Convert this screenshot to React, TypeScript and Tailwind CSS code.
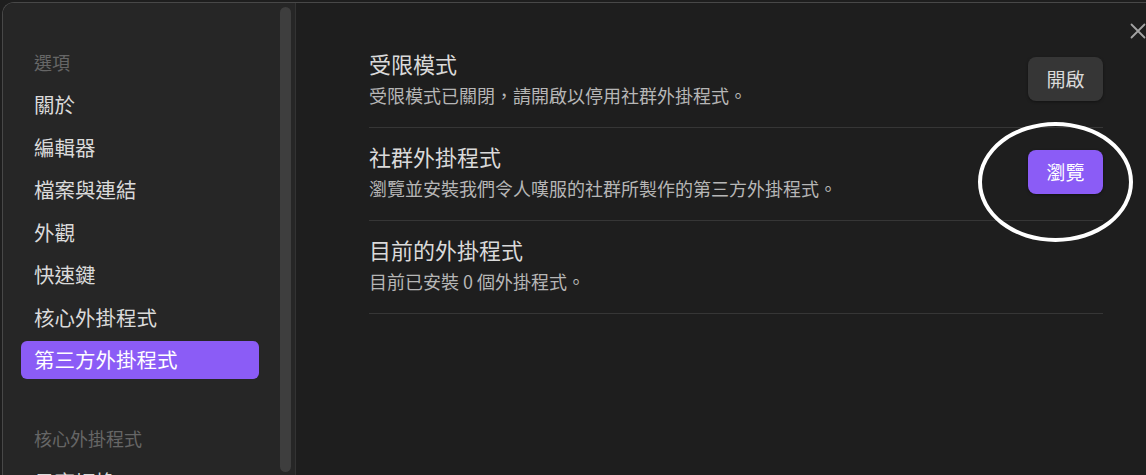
/* Settings modal — third-party plugins page (dark theme). */
const cjk = { fontFamily: '"Noto Sans CJK TC", "Noto Sans", sans-serif' };

const nav = ["關於", "編輯器", "檔案與連結", "外觀", "快速鍵", "核心外掛程式", "第三方外掛程式"];
const active = "第三方外掛程式";

interface Setting { title: string; desc: string; button: string; accent?: boolean }
const settings: Setting[] = [
  { title: "受限模式", desc: "受限模式已關閉，請開啟以停用社群外掛程式。", button: "開啟" },
  { title: "社群外掛程式", desc: "瀏覽並安裝我們令人嘆服的社群所製作的第三方外掛程式。", button: "瀏覽", accent: true },
  { title: "目前的外掛程式", desc: "目前已安裝 0 個外掛程式。", button: "" },
];

function Row({ s }: { s: Setting }) {
  return (
    <div className="flex items-center border-b border-[#363636] pt-[14px] pb-[18px]">
      <div className="flex-1">
        <div className="text-[22px] leading-[28px] text-[#dadada]">{s.title}</div>
        <div className="mt-[4px] text-[18px] leading-[28px] text-[#b6b6b6]">{s.desc}</div>
      </div>
      {s.button && (
        <button
          className={`h-[44px] w-[75px] rounded-lg text-[19px] shadow-[0_1px_3px_rgba(0,0,0,0.4)] ${
            s.accent ? "bg-[#8b5cf6] text-white" : "bg-[#363636] text-[#dadada]"}`}>
          {s.button}
        </button>
      )}
    </div>
  );
}

export default function App() {
  return (
    <div className="relative h-[475px] w-[1146px] overflow-hidden bg-[#1e1e1e] pl-[2px] pt-[2px]" style={cjk}>
      <div className="flex h-[520px] overflow-hidden rounded-tl-[12px] border-l border-t border-[#484848]">
        {/* sidebar */}
        <div className="flex w-[293px] shrink-0 border-r border-[#333] bg-[#262626]">
          <div className="w-[256px] pl-[18px] pt-[47px]">
            <div className="pl-[13px] text-[18px] leading-[24px] text-[#666]">選項</div>
            <div className="mt-[11.5px] flex flex-col gap-[4px]">
              {nav.map((n) => (
                <div key={n}
                  className={`flex h-[38.5px] items-center rounded-md pl-[13px] text-[20.5px] ${
                    n === active ? "bg-[#8b5cf6] text-white" : "text-[#dadada]"}`}>
                  {n}
                </div>
              ))}
            </div>
            <div className="mt-[47px] pl-[13px] text-[18px] leading-[24px] text-[#666]">核心外掛程式</div>
            <div className="mt-[19px] pl-[13px] text-[20.5px] leading-[24px] text-[#dadada]">日夜切換</div>
          </div>
          <div className="ml-auto mr-[4px] mt-[4px] h-[465px] w-[11px] rounded-full bg-[#3e3e3e]" />
        </div>

        {/* content */}
        <div className="flex-1 bg-[#1e1e1e] pl-[73px] pr-[43px] pt-[32px]">
          {settings.map((s) => <Row key={s.title} s={s} />)}
        </div>
      </div>

      {/* close */}
      <svg className="absolute left-[1130px] top-[23px]" width="16" height="16" viewBox="0 0 16 16"
        fill="none" stroke="#a3a3a3" strokeWidth="1.8" strokeLinecap="round">
        <path d="M1.5 1.5l13 13M14.5 1.5l-13 13" />
      </svg>

      {/* annotation */}
      <div className="pointer-events-none absolute left-[978px] top-[122px] h-[120px] w-[155px] rounded-[50%] border-[4px] border-white" />
    </div>
  );
}
